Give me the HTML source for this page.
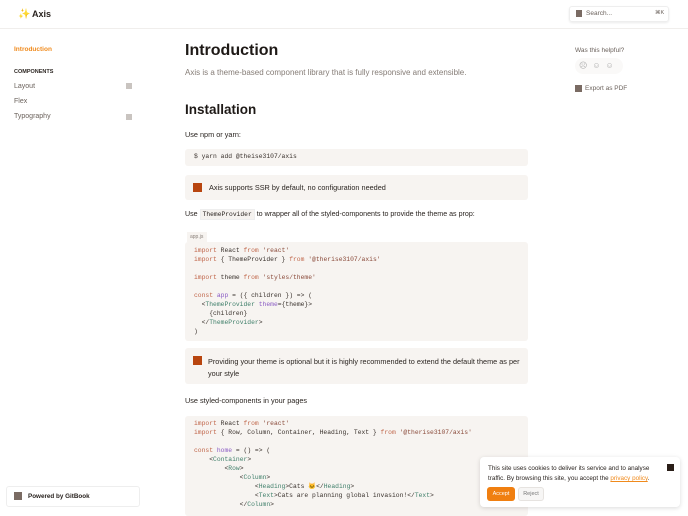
<!DOCTYPE html><html><head><style>
*{margin:0;padding:0;box-sizing:border-box}
body{width:688px;height:512px;overflow:hidden;background:#fff;font-family:"Liberation Sans",sans-serif;color:#29231f;position:relative}
.a{position:absolute;white-space:nowrap}
.s{font-size:7px;color:#6b625c}
.code{position:absolute;background:#f7f4f1;border-radius:3px;font-family:"Liberation Mono",monospace;font-size:6.35px;line-height:8.95px;color:#3a322d;padding:0 9px;white-space:pre}
.k{color:#c0664a}.st{color:#8a4a3a}.g{color:#3f7f6a}.p{color:#8a5bc4}
.hint{position:absolute;background:#f7f4f1;border-radius:3px;left:185px;width:343px;font-size:7.3px;color:#2c2622}
.sq{position:absolute;width:9px;height:9px;background:#b8450f;left:8px}
</style></head><body>
<div class="a" style="left:18px;top:9px;font-size:10px;color:#f0a030">✨</div>
<div class="a" style="left:32px;top:9px;font-size:9px;font-weight:bold">Axis</div>
<div class="a" style="left:569px;top:6px;width:100px;height:16px;border:1px solid #eee;border-radius:3px;box-shadow:0 1px 2px rgba(0,0,0,.08)"></div>
<div class="a" style="left:576px;top:10px;width:6px;height:7px;background:#7a6b63"></div>
<div class="a s" style="left:586px;top:10px;font-size:6.5px">Search...</div>
<div class="a s" style="left:655px;top:10px;font-size:5.5px">⌘K</div>
<div class="a" style="left:0;top:28px;width:688px;height:1px;background:#f0eeec"></div>
<div class="a" style="left:14px;top:46px;font-size:6.5px;color:#f08a1c;font-weight:bold">Introduction</div>
<div class="a" style="left:14px;top:69px;font-size:5.5px;font-weight:bold;color:#2c2622">COMPONENTS</div>
<div class="a s" style="left:14px;top:83px">Layout</div><div class="a" style="left:126px;top:83px;width:6px;height:6px;background:#c9c4c0"></div>
<div class="a s" style="left:14px;top:98px">Flex</div>
<div class="a s" style="left:14px;top:113px">Typography</div><div class="a" style="left:126px;top:114px;width:6px;height:6px;background:#c9c4c0"></div>
<div class="a" style="left:185px;top:42px;font-size:16px;font-weight:bold;color:#1e1916">Introduction</div>
<div class="a" style="left:185px;top:68px;font-size:8px;color:#857c76">Axis is a theme-based component library that is fully responsive and extensible.</div>
<div class="a" style="left:185px;top:102px;font-size:13.5px;font-weight:bold;color:#1e1916">Installation</div>
<div class="a" style="left:185px;top:130px;font-size:7.3px">Use npm or yarn:</div>
<div class="code" style="left:185px;top:149px;width:343px;height:17px;padding-top:4px">$ yarn add @theise3107/axis</div>
<div class="hint" style="top:175px;height:25px"><div class="sq" style="top:8px"></div><div class="a" style="left:24px;top:8px">Axis supports SSR by default, no configuration needed</div></div>
<div class="a" style="left:185px;top:210px;font-size:7.1px">Use <span style="font-family:'Liberation Mono',monospace;font-size:6.3px;background:#f5f2ef;border:1px solid #eee;padding:1px 2px">ThemeProvider</span> to wrapper all of the styled-components to provide the theme as prop:</div>
<div class="a" style="left:187px;top:232px;width:20px;height:10px;background:#f7f4f1;font-size:5px;color:#8a817b;padding:2px 3px">app.js</div>
<div class="code" style="left:185px;top:242px;width:343px;height:99px;padding-top:5px"><span class="k">import</span> React <span class="k">from</span> <span class="st">'react'</span>
<span class="k">import</span> { ThemeProvider } <span class="k">from</span> <span class="st">'@therise3107/axis'</span>

<span class="k">import</span> theme <span class="k">from</span> <span class="st">'styles/theme'</span>

<span class="k">const</span> <span class="p">app</span> = ({ children }) => (
  &lt;<span class="g">ThemeProvider</span> <span class="p">theme</span>={theme}&gt;
    {children}
  &lt;/<span class="g">ThemeProvider</span>&gt;
)</div>
<div class="hint" style="top:348px;height:36px"><div class="sq" style="top:8px"></div><div class="a" style="left:23px;top:8px;line-height:12px;white-space:normal;width:315px">Providing your theme is optional but it is highly recommended to extend the default theme as per your style</div></div>
<div class="a" style="left:185px;top:396px;font-size:7.3px">Use styled-components in your pages</div>
<div class="code" style="left:185px;top:416px;width:343px;height:100px;padding-top:4px"><span class="k">import</span> React <span class="k">from</span> <span class="st">'react'</span>
<span class="k">import</span> { Row, Column, Container, Heading, Text } <span class="k">from</span> <span class="st">'@therise3107/axis'</span>

<span class="k">const</span> <span class="p">home</span> = () => (
    &lt;<span class="g">Container</span>&gt;
        &lt;<span class="g">Row</span>&gt;
            &lt;<span class="g">Column</span>&gt;
                &lt;<span class="g">Heading</span>&gt;Cats 🐱&lt;/<span class="g">Heading</span>&gt;
                &lt;<span class="g">Text</span>&gt;Cats are planning global invasion!&lt;/<span class="g">Text</span>&gt;
            &lt;/<span class="g">Column</span>&gt;</div>
<div class="a s" style="left:575px;top:47px;font-size:6.5px">Was this helpful?</div>
<div class="a" style="left:575px;top:58px;width:48px;height:16px;border-radius:8px;background:#faf9f8"></div>
<div class="a s" style="left:579px;top:61px;font-size:8px;color:#aaa;letter-spacing:5px">☹☺☺</div>
<div class="a" style="left:575px;top:85px;width:7px;height:7px;background:#7a6b63"></div>
<div class="a s" style="left:585px;top:85px;font-size:6.5px">Export as PDF</div>
<div class="a" style="left:6px;top:486px;width:134px;height:21px;border:1px solid #eee;border-radius:3px;background:#fff"></div>
<div class="a" style="left:14px;top:492px;width:8px;height:8px;background:#7a6b63"></div>
<div class="a" style="left:28px;top:493px;font-size:6.3px;font-weight:bold">Powered by GitBook</div>
<div class="a" style="left:480px;top:457px;width:200px;height:50px;background:#fff;border-radius:4px;box-shadow:0 1px 5px rgba(0,0,0,.15)"></div>
<div class="a" style="left:488px;top:464px;font-size:6.3px;line-height:10px;white-space:normal;width:170px">This site uses cookies to deliver its service and to analyse traffic. By browsing this site, you accept the <span style="color:#f08a1c;text-decoration:underline">privacy policy</span>.</div>
<div class="a" style="left:667px;top:464px;width:7px;height:7px;background:#2a1e18"></div>
<div class="a" style="left:487px;top:487px;width:28px;height:14px;background:#f07f10;border-radius:3px;color:#fff;font-size:5.5px;text-align:center;line-height:14px">Accept</div>
<div class="a" style="left:518px;top:487px;width:26px;height:14px;background:#f7f6f5;border:1px solid #e6e3e0;border-radius:3px;color:#777;font-size:5.5px;text-align:center;line-height:12px">Reject</div>
</body></html>
